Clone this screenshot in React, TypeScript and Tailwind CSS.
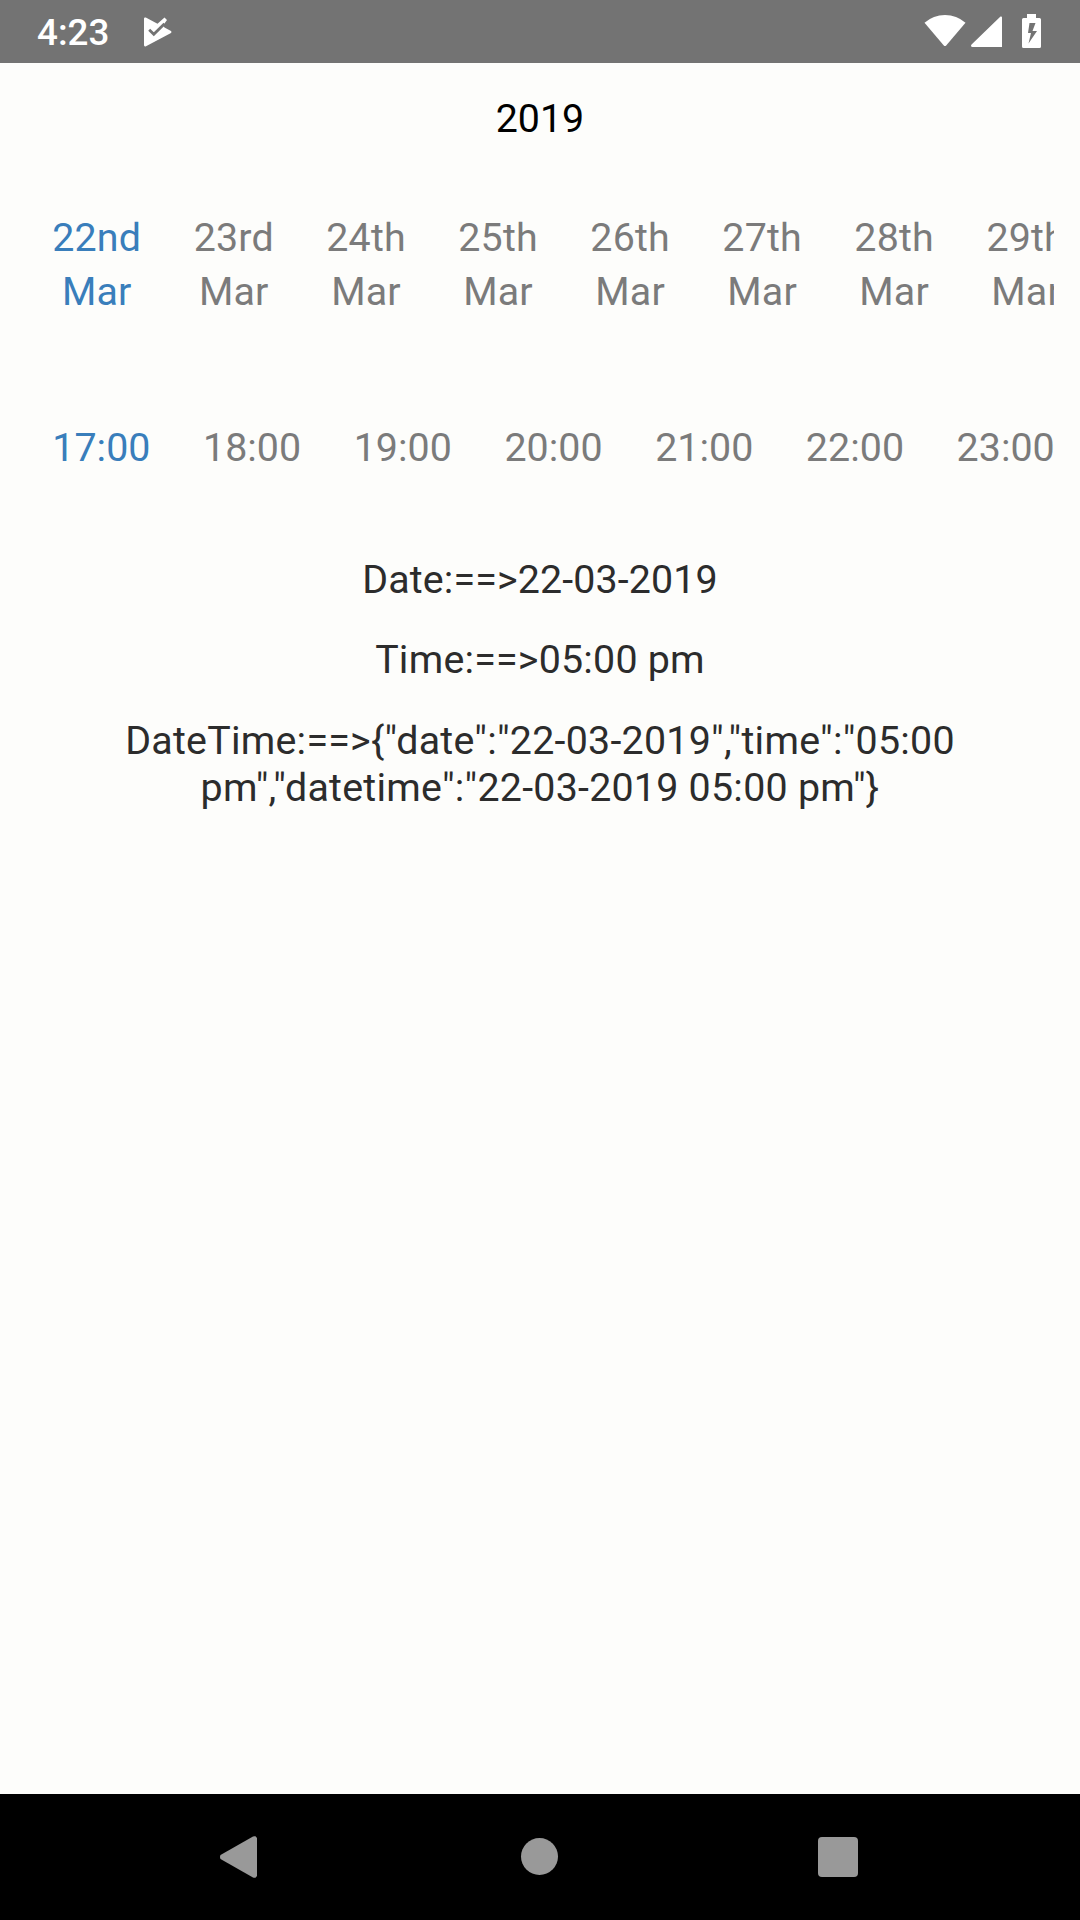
import React from 'react';

const dates = ['22nd', '23rd', '24th', '25th', '26th', '27th', '28th', '29th'];
const times = ['17:00', '18:00', '19:00', '20:00', '21:00', '22:00', '23:00'];

function StatusBar() {
  return (
    <header className="flex h-[63px] shrink-0 items-center bg-[#737373] pl-[37px] pr-[39px] text-white">
      <span className="pt-0.5 text-[36.75px] leading-[43px] font-medium">4:23</span>
      <svg className="ml-[35px] h-[30px] w-[28px]" viewBox="0 0 28 30" fill="none">
        <path d="M0 1.8Q0 0 1.8.6L13.5 6.8 20.5.5 23 3 19 8.5 20.5 10.5 27 14.1Q28 15 27 16L2 29.2Q0 30 0 28Z" fill="currentColor" />
        <path d="M5.2 12.8 9.8 17.3 20.5 6.8" stroke="#737373" strokeWidth="2.8" />
      </svg>
      <div className="ml-auto flex items-center">
        <svg className="h-[34px] w-[42px]" viewBox="0 0 42 34" fill="currentColor">
          <path d="M.5 7.8Q9.3 0 21 0T41.5 7.8L22.2 30.5Q21 31.5 19.8 30.5Z" />
        </svg>
        <svg className="ml-[5px] h-[32px] w-[32px]" viewBox="0 0 32 32" fill="currentColor">
          <path d="M29.5.5Q31 0 31 1.5V31H1.5Q0 31 0 29.5Q0 29 .8 28.3Z" />
        </svg>
        <svg className="-mt-0.5 ml-[19px] h-[34px] w-[19px]" viewBox="0 0 19 34" fill="currentColor">
          <path fillRule="evenodd" d="M5 0H14V4H17.5Q19 4 19 5.5V32.5Q19 34 17.5 34H1.5Q0 34 0 32.5V5.5Q0 4 1.5 4H5ZM7.5 9 6 19H9L6.5 29.5 15 17H10.5L13.5 9Z" />
        </svg>
      </div>
    </header>
  );
}

function NavigationBar() {
  return (
    <nav className="flex h-[126px] shrink-0 items-center bg-black pl-[219px] text-[#999999]">
      <svg className="h-[42px] w-[39px]" viewBox="0 0 39 42" fill="currentColor">
        <path d="M1.5 19 34 .5Q35 0 36.5.3L38 2V40L36.5 41.7Q35 42 34 41.5L1.5 23Q.5 21 1.5 19Z" />
      </svg>
      <div className="-mt-px ml-[263px] h-[37px] w-[37px] rounded-full bg-[#999999]" />
      <div className="ml-[260px] h-10 w-10 rounded-[4px] bg-[#999999]" />
    </nav>
  );
}

export default function App() {
  return (
    <div
      className="flex h-[1920px] w-[1080px] flex-col overflow-hidden bg-[#fdfdfb] text-[39.375px] leading-[47px] text-[#2c2c2c]"
      style={{ fontFamily: 'Roboto, sans-serif' }}
    >
      <StatusBar />
      <main className="flex-1">
        <h1 className="pt-8 text-center text-black">2019</h1>
        <div className="mx-[26px] mt-[72px] flex overflow-hidden tracking-[0.18px] text-[#7b7b7b]">
          {dates.map((day, i) => (
            <div
              key={day}
              className={`shrink-0 px-[26.25px] text-center ${i === 0 ? 'text-[#397ebb]' : ''}`}
            >
              <div>{day}</div>
              <div className="mt-[7px]">Mar</div>
            </div>
          ))}
        </div>
        <div className="mx-[26px] mt-[109px] flex overflow-hidden tracking-[0.04px] text-[#7b7b7b]">
          {times.map((time, i) => (
            <div
              key={time}
              className={`shrink-0 px-[26.25px] ${i === 0 ? 'text-[#397ebb]' : ''}`}
            >
              {time}
            </div>
          ))}
        </div>
        <section className="mt-[85px] text-center">
          <p className="tracking-[0.14px]">Date:==&gt;22-03-2019</p>
          <p className="mt-[33px] tracking-[0.22px]">Time:==&gt;05:00 pm</p>
          <p className="mt-[34px] tracking-[0.25px]">
            DateTime:==&gt;&#123;"date":"22-03-2019","time":"05:00
            <br />
            pm","datetime":"22-03-2019 05:00 pm"&#125;
          </p>
        </section>
      </main>
      <NavigationBar />
    </div>
  );
}
